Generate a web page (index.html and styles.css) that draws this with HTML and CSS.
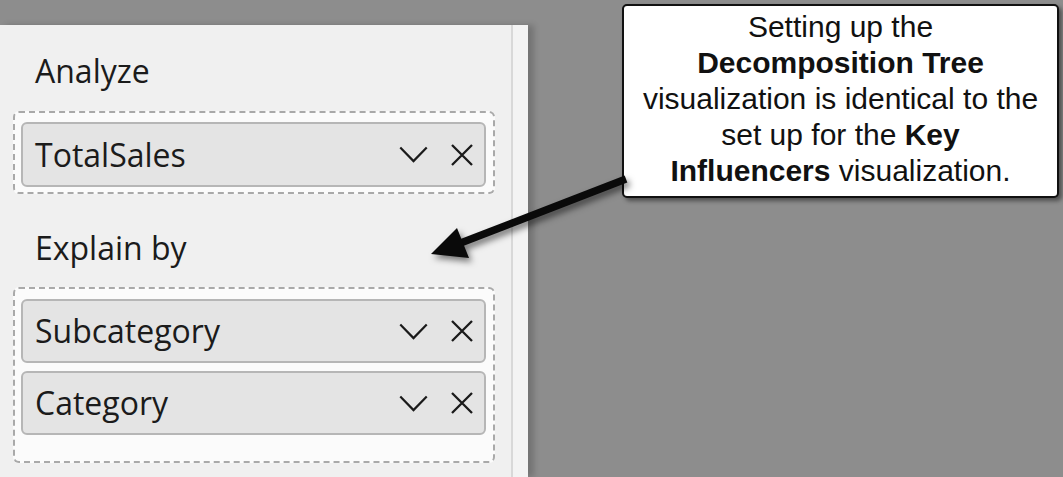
FILE: index.html
```html
<!DOCTYPE html>
<html lang="en">
<head>
    <meta charset="UTF-8">
    <title>Decomposition Tree fields</title>
    <link rel="stylesheet" href="styles.css">
</head>
<body>

    <div class="stage">
        <aside class="panel">
            <div class="wells">
                <div class="well-title">Analyze</div>
                <div class="drop">
                    <div class="field big">
                        <span class="field-name">TotalSales</span>
                        <span class="actions">
                            <svg class="chevron" viewBox="0 0 30 18"><polyline points="1,1.5 15,16 29,1.5"/></svg>
                            <svg class="close" viewBox="0 0 22 22"><path d="M1 1 L21 21 M21 1 L1 21"/></svg>
                        </span>
                    </div>
                </div>

                <div class="well-title second">Explain by</div>
                <div class="drop tall">
                    <div class="field">
                        <span class="field-name">Subcategory</span>
                        <span class="actions">
                            <svg class="chevron" viewBox="0 0 30 18"><polyline points="1,1.5 15,16 29,1.5"/></svg>
                            <svg class="close" viewBox="0 0 22 22"><path d="M1 1 L21 21 M21 1 L1 21"/></svg>
                        </span>
                    </div>
                    <div class="field">
                        <span class="field-name">Category</span>
                        <span class="actions">
                            <svg class="chevron" viewBox="0 0 30 18"><polyline points="1,1.5 15,16 29,1.5"/></svg>
                            <svg class="close" viewBox="0 0 22 22"><path d="M1 1 L21 21 M21 1 L1 21"/></svg>
                        </span>
                    </div>
                </div>
            </div>
            <div class="scroll"></div>
        </aside>

        <div class="callout">
            Setting up the<br>
            <strong>Decomposition Tree</strong><br>
            visualization is identical to the<br>
            set up for the <strong>Key</strong><br>
            <strong>Influencers</strong> visualization.
        </div>

        <!-- arrow from the callout to the Explain by well -->
        <svg class="arrow" viewBox="0 0 1063 477">
            <line x1="626" y1="179" x2="458" y2="244"/>
            <polygon points="431,254 457,228 469,258"/>
        </svg>
    </div>

</body>
</html>
```

FILE: styles.css
```css
body {
    margin: 0;
    background-color: #8d8d8d;
    font-family: "Open Sans", "Noto Sans", sans-serif;
    color: #1b1b1b;
}
.stage {
    position: relative;
    width: 1063px;
    height: 477px;
    padding-top: 25px;
    box-sizing: border-box;
    overflow: hidden;
}
.panel {
    display: flex;
    width: 528px;
    height: 452px;
    background: #f0f0f0;
    box-shadow: 6px 0 6px rgba(0,0,0,0.18);
}
.wells {
    width: 513px;
    box-sizing: border-box;
    padding: 26px 16px 0 13px;
    border-right: 2px solid #d8d8d8;
}
.scroll {
    flex: 1;
    background: #f3f3f3;
}
.well-title {
    font-size: 32px;
    line-height: 40px;
    padding-left: 22px;
    margin-bottom: 20px;
}
.well-title.second {
    margin-top: 34px;
    margin-bottom: 19px;
}
.drop {
    border: 2px dashed #a9a9a9;
    border-radius: 6px;
    background: #fbfbfb;
    padding: 9px 7px 5px 6px;
    display: flex;
    flex-direction: column;
    gap: 8px;
}
.drop.tall {
    padding-top: 10px;
    padding-bottom: 26px;
}
.field {
    height: 64px;
    box-sizing: border-box;
    display: flex;
    align-items: center;
    justify-content: space-between;
    background: #e4e4e4;
    border: 2px solid #b6b6b6;
    border-radius: 6px;
    padding: 0 11px 0 12px;
}
.field.big {
    height: 65px;
}
.field-name {
    font-size: 32px;
    line-height: 40px;
}
.actions {
    display: flex;
    align-items: center;
    gap: 23px;
}
.chevron {
    width: 29px;
    height: 17px;
    fill: none;
    stroke: #1a1a1a;
    stroke-width: 2.3;
}
.close {
    width: 22px;
    height: 22px;
    fill: none;
    stroke: #1a1a1a;
    stroke-width: 2.3;
}
.callout {
    position: absolute;
    left: 622px;
    top: 4px;
    width: 437px;
    height: 194px;
    box-sizing: border-box;
    padding-top: 3px;
    background: white;
    border: 2px solid #111;
    border-radius: 5px;
    box-shadow: 3px 3px 4px rgba(0,0,0,0.45);
    font-family: "Liberation Sans", Arial, sans-serif;
    font-size: 30px;
    line-height: 36px;
    text-align: center;
    color: #111;
}
.callout strong {
    font-weight: bold;
}
.arrow {
    position: absolute;
    left: 0;
    top: 0;
    width: 1063px;
    height: 477px;
    pointer-events: none;
    filter: drop-shadow(3px 4px 3px rgba(0,0,0,0.5));
}
.arrow line {
    stroke: #0a0a0a;
    stroke-width: 7.5;
}
.arrow polygon {
    fill: #0a0a0a;
}
```
